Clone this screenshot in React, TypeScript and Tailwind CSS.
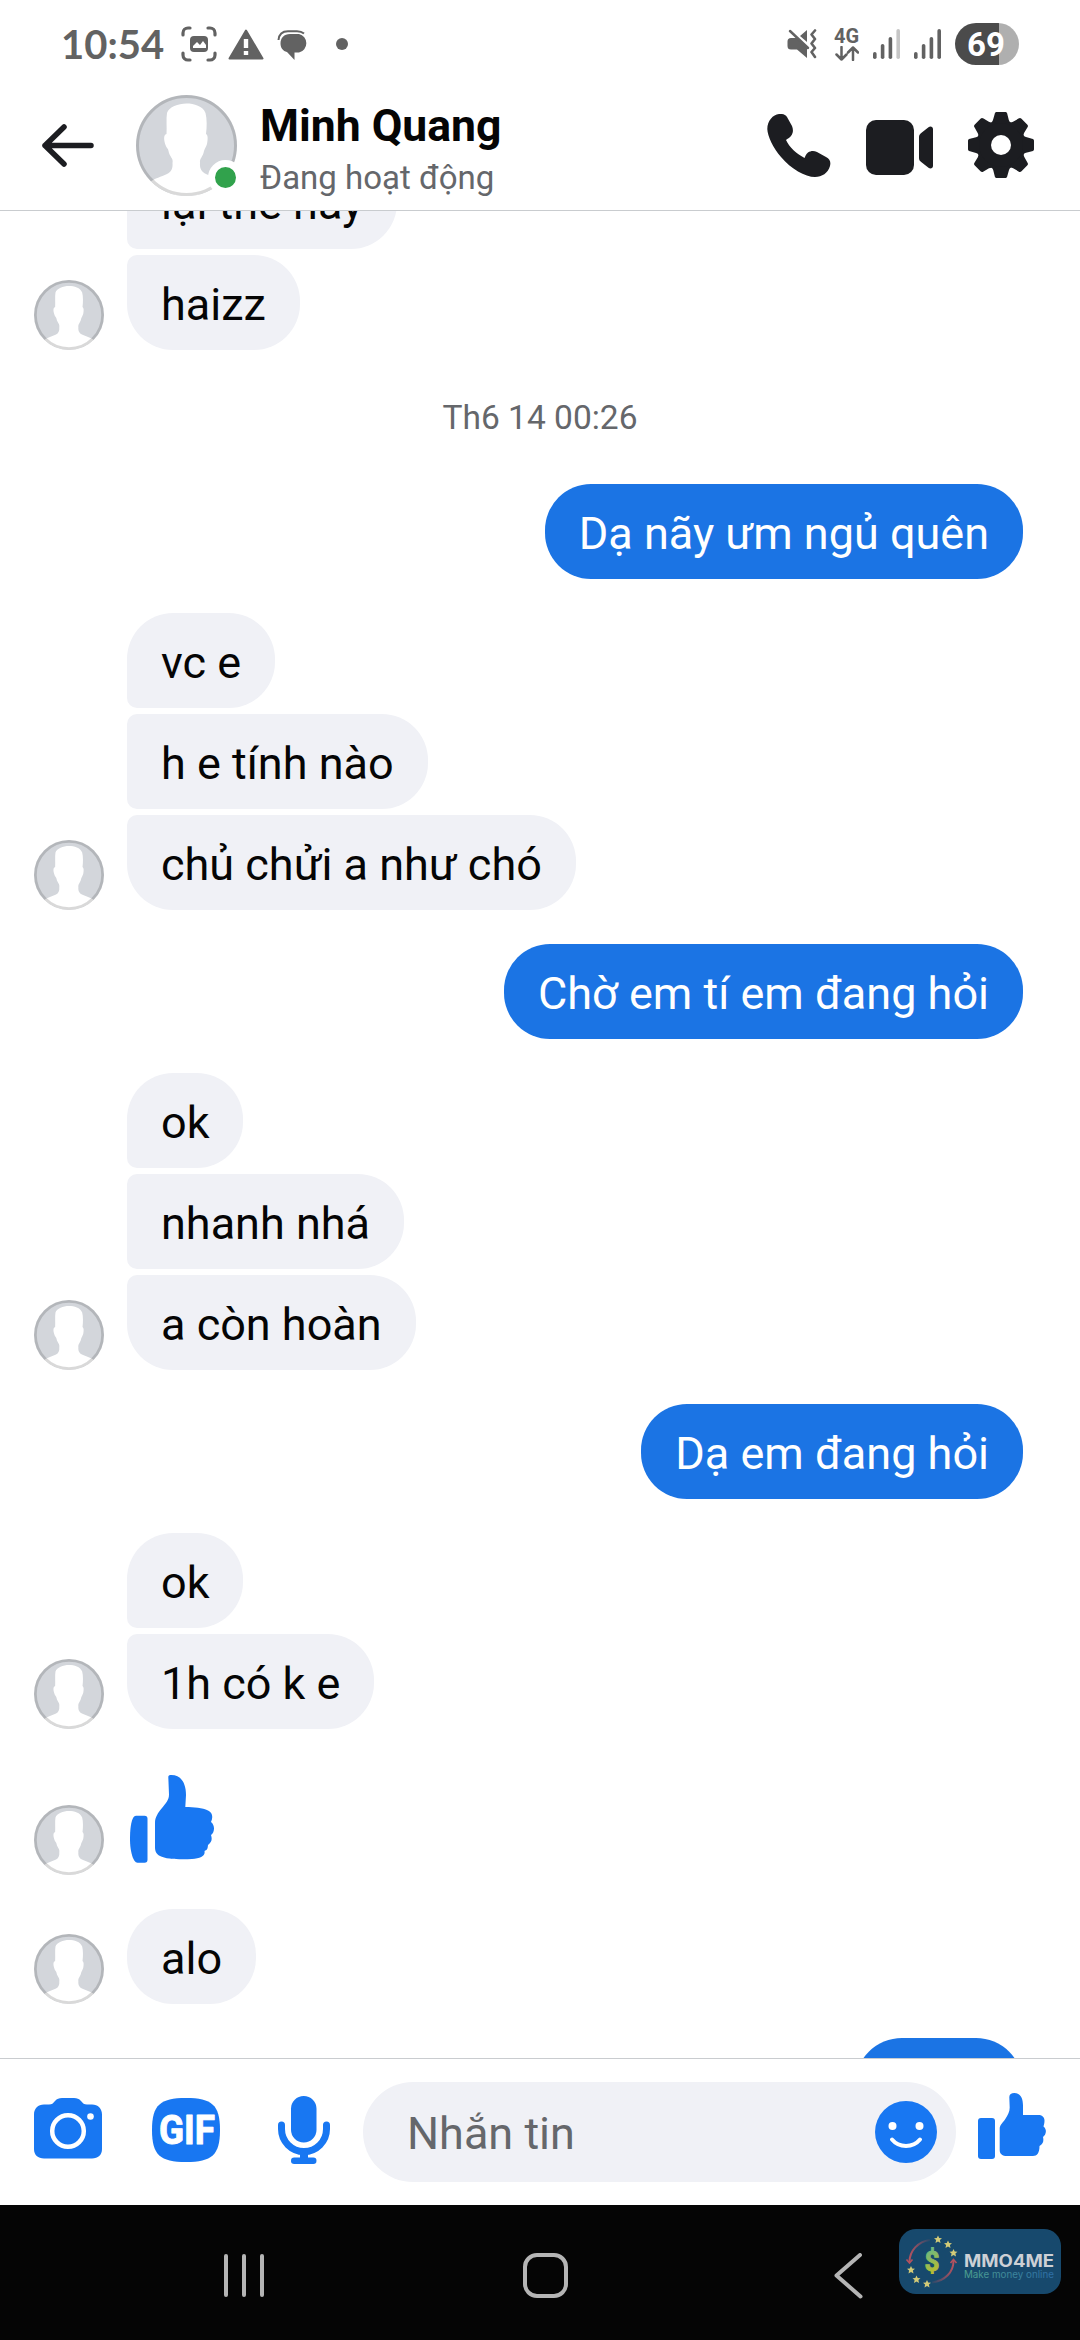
import React from 'react'

type Corner = 'single' | 'first' | 'middle' | 'last'

interface Group {
  from: 'me' | 'them'
  texts: string[]
}

// Groups of messages, in the order they were sent
const GROUPS: Group[] = [
  { from: 'me', texts: ['Dạ nãy ưm ngủ quên'] },
  { from: 'them', texts: ['vc e', 'h e tính nào', 'chủ chửi a như chó'] },
  { from: 'me', texts: ['Chờ em tí em đang hỏi'] },
  { from: 'them', texts: ['ok', 'nhanh nhá', 'a còn hoàn'] },
  { from: 'me', texts: ['Dạ em đang hỏi'] },
  { from: 'them', texts: ['ok', '1h có k e'] },
]

const CORNERS: Record<Corner, string> = {
  single: 'rounded-[46px]',
  first: 'rounded-[46px] rounded-bl-[10px]',
  middle: 'rounded-r-[46px] rounded-l-[10px]',
  last: 'rounded-[46px] rounded-tl-[10px]',
}

const cornerFor = (i: number, count: number): Corner => {
  if (count === 1) return 'single'
  if (i === 0) return 'first'
  return i === count - 1 ? 'last' : 'middle'
}

const Avatar: React.FC<{ className: string; ring?: number }> = ({ className, ring = 4 }) => (
  <svg viewBox="0 0 101 101" className={className}>
    <clipPath id="avatar-clip">
      <circle cx="50.5" cy="50.5" r="50.5" />
    </clipPath>
    <g clipPath="url(#avatar-clip)">
      <rect width="101" height="101" fill="#d3d6db" />
      <path
        fill="#fff"
        d="M50.5 8.5C42 8.5 33 12 31 18c-1 6 0 14-.5 21-3.500 1-2.500 7-1 11 1.500 4 2.500 3 3 6 1 6 5 7 4 12 .5 6-1.500 9-5.500 11-6 3-12 4-17 8v14h73V87c-5-4-11-5-17-8-4-2-6.500-5-6-11-.5-5 3-6 4-12 1-3 2-4 3-7 1-5 1-9-1-10 1-7 1-15-.5-21C67 11 58 8.500 50.500 8.500Z"
      />
    </g>
    <circle cx="50.5" cy="50.5" r={50.5 - ring / 2} fill="none" stroke="#000" strokeOpacity=".15" strokeWidth={ring} />
  </svg>
)

const Bubble: React.FC<{ mine?: boolean; corner: Corner; children: React.ReactNode }> = ({ mine, corner, children }) => (
  <div
    className={`flex h-[95px] w-fit items-center px-[34px] pt-1 text-[45px] leading-none whitespace-nowrap ${
      mine ? 'bg-[#1b74e4] text-white' : 'bg-[#f0f1f6] text-[#050505]'
    } ${CORNERS[corner]}`}
  >
    {children}
  </div>
)

const MessageGroup: React.FC<{ group: Group }> = ({ group }) => {
  const mine = group.from === 'me'
  return (
    <div className={`flex items-end ${mine ? 'justify-end pr-[57px]' : 'pl-[34px]'}`}>
      {!mine && <Avatar className="mr-[23px] size-[70px] shrink-0" />}
      <div className="flex flex-col gap-1.5">
        {group.texts.map((text, i) => (
          <Bubble key={i} mine={mine} corner={cornerFor(i, group.texts.length)}>
            {text}
          </Bubble>
        ))}
      </div>
    </div>
  )
}

// Four signal bars; the ones past `level` are dimmed
const Signal: React.FC<{ level: number }> = ({ level }) => (
  <svg viewBox="0 0 27 30" className="h-[30px] w-[27px]">
    {[7, 15, 22, 30].map((h, i) => (
      <rect key={h} x={i * 7.8} y={30 - h} width="3.600" height={h} rx="1.800" fill={i < level ? '#626262' : '#c6c6c6'} />
    ))}
  </svg>
)

const StatusBar: React.FC = () => (
  <div className="flex h-[88px] items-center pr-[61px] pl-[61px] text-[#626262]">
    <span className="w-[103px] font-['Lato',sans-serif] text-[40px] leading-none font-bold">
      10:54
    </span>
    <svg viewBox="0 0 36 36" className="ml-[17px] size-[36px]" fill="none" stroke="currentColor" strokeWidth="3.200" strokeLinecap="round">
      <path d="M2 9V7a5 5 0 0 1 5-5h2M27 2h2a5 5 0 0 1 5 5v2M34 27v2a5 5 0 0 1-5 5h-2M9 34H7a5 5 0 0 1-5-5v-2" />
      <rect x="9" y="10" width="18" height="16" rx="4" fill="currentColor" stroke="none" />
      <path d="M12 22v-2l4-4 3 3 3-4 3 4v3Z" fill="#fff" stroke="none" />
    </svg>
    <svg viewBox="0 0 36 31" className="ml-[11px] h-[31px] w-[36px]">
      <path d="M18 1.500 34.500 29.500H1.500Z" fill="currentColor" stroke="currentColor" strokeWidth="2" strokeLinejoin="round" />
      <path d="M15.800 10h4.400v9h-4.400zM15.800 22h4.400v4h-4.400z" fill="#fff" />
    </svg>
    <svg viewBox="0 0 32 30" className="mt-[2px] ml-[13px] h-[30px] w-[32px]">
      <path d="M1.500 10C2 4 6 1.200 11 1.200h9c3 0 5 .6 7 2.300" fill="none" stroke="currentColor" strokeWidth="2" />
      <path d="M13 4h9a9.500 9.500 0 0 1 0 18.500h-4.500V30L10 22C6 21 3.500 18 3.500 13.500 3.500 8 7 4 13 4Z" fill="currentColor" />
    </svg>
    <span className="ml-[27px] size-3 rounded-full bg-[#626262]" />

    <div className="ml-auto flex items-center">
      <svg viewBox="0 0 30 30" className="h-[30px] w-[30px]">
        <path d="M4 9h7l9 9v11L10 20.500H4a3.500 3.500 0 0 1-3.500-3.500v-4.500A3.500 3.500 0 0 1 4 9ZM13 7l7-6v12Z" fill="currentColor" />
        <path d="m3 2 18 17" stroke="currentColor" strokeWidth="2.500" strokeLinecap="round" />
        <path d="m28 1.500-3.500 4 3.500 4.500-3.500 4.500 3.500 4.500-3.500 4 3.500 5" fill="none" stroke="currentColor" strokeWidth="2.600" strokeLinejoin="round" strokeLinecap="round" />
      </svg>
      <div className="ml-[16px] flex w-[27px] flex-col items-center">
        <span className="font-['Roboto',sans-serif] text-[20px] leading-[17px] font-bold">4G</span>
        <svg viewBox="0 0 24 15" className="mt-[1px] h-[15px] w-[24px]" fill="none" stroke="currentColor" strokeWidth="2.500" strokeLinecap="round" strokeLinejoin="round">
          <path d="M6.500 1v12.500m-5-5 5 5 5-5M18 14V1.500m-5 5 5-5 5 5" />
        </svg>
      </div>
      <div className="ml-[13px] flex gap-[14px]">
        <Signal level={3} />
        <Signal level={4} />
      </div>
      <div className="ml-[14px] flex h-[42px] w-[64px] items-center justify-center rounded-full bg-linear-to-r from-[#4b4b4b] from-[68%] to-[#afafaf] to-[68%] pr-0.5 font-['Roboto',sans-serif] text-[33px] leading-none font-bold text-white">
        69
      </div>
    </div>
  </div>
)

const PhoneIcon = () => (
  <svg viewBox="0 0 64 63" className="h-[63px] w-[64px]" fill="#1c1d21">
    <path d="M12 0c4-.3 6.500.5 8 3l5 9c1.500 4 1.200 7-1 10-1.500 2-3.500 2.500-5 4 3 7 11 14 18.500 18 1-2 1.500-4 3.500-5.500 3-2 6-2 9-.5l9 5c4 2 5 5 4 9C61 59 55 63 48 63 38 63 24 55 14 43 6 34 .5 22 .3 15 .3 7 6 .5 12 0Z" />
  </svg>
)

const VideoIcon = () => (
  <svg viewBox="0 0 67 55" className="mt-[4px] h-[55px] w-[67px]" fill="#1c1d21">
    <rect width="48" height="55" rx="10" />
    <path d="M53 17c0-2 .8-3 2.500-4.300l7-5.500c2-1.500 4.500-.5 4.500 2v36.600c0 2.500-2.500 3.500-4.500 2l-7-5.500C53.800 41 53 40 53 38Z" />
  </svg>
)

const GearIcon = () => (
  <svg viewBox="0 0 66 66" className="size-[66px]" fill="#1c1d21">
    {[0, 45, 90, 135, 180, 225, 270, 315].map((deg) => (
      <path key={deg} transform={`rotate(${deg} 33 33)`} d="M29 0h8c1.500 0 2 .6 2.300 2l1.500 6c.6 2 2 3 4 4v8H21v-8c2-1 3.400-2 4-4l1.700-6C27 .6 27.500 0 29 0Z" />
    ))}
    <circle cx="33" cy="33" r="22" />
    <circle cx="33" cy="33" r="10" fill="#fff" />
  </svg>
)

const Header: React.FC = () => (
  <header className="flex h-[122px] items-start pr-[46px] pl-[42px]">
    <svg viewBox="0 0 52 43" className="mt-[36px] h-[43px] w-[52px]" fill="none" stroke="#1c1d21" strokeWidth="5.500" strokeLinecap="round" strokeLinejoin="round">
      <path d="M22 3 3 21.500 22 40M3 21.500h46" />
    </svg>
    <div className="relative mt-[7px] ml-[42px]">
      <Avatar className="size-[101px]" ring={3} />
      <span className="absolute right-[-6px] bottom-[1px] size-[35px] rounded-full border-[7px] border-white bg-[#31a24c]" />
    </div>
    <div className="ml-[23px] flex flex-col">
      <h1 className="mt-[14px] text-[44.500px] leading-[48px] font-bold text-[#050505]">Minh Quang</h1>
      <p className="mt-[7px] text-[33px] leading-[41px] text-[#65676b]">Đang hoạt động</p>
    </div>
    <div className="mt-[24px] ml-auto flex items-center gap-[35px]">
      <PhoneIcon />
      <VideoIcon />
      <GearIcon />
    </div>
  </header>
)

const BigLike = () => (
  <svg viewBox="0 0 84 88" className="h-[88px] w-[84px]" fill="#1877f2">
    <path d="M6 40.700h8.500a3 3 0 0 1 3 3v41a3 3 0 0 1-3 3H7.500C3 87.700 0 76 0 64c0-11 1.500-23.300 6-23.300Z" />
    <path d="M38.300 2c0-1.500 1-2 3-2C51 0 56 8 56 20l-.7 12c9 0 17 .8 22.700 3.500 5 2.500 5 7 3 11.500 4 3 4 10 0 13 1.500 5 .5 7-3 10-.3 4-1 5-3.500 6 1 5-4 7.500-12.500 8C52 84.500 36 84.500 30 81c-4-2-5-5-5-9V48c0-6 3-10 7-15s7-8 7-13.500Z" />
  </svg>
)

const SmallLike = () => (
  <svg viewBox="0 0 68 66" className="h-[66px] w-[68px]" fill="#1877f2">
    <rect y="25" width="17" height="41" rx="3" />
    <path d="M31.300 4c0-2.500 2-4 5-4C43 0 45 6 45 12.500V22h15c4 0 6.500 2 6.500 5.500 0 2.500-.5 4-1 6 3.500 2.500 3 8-.5 10.500 1 4 0 7-3.500 9C61.500 60 59 63 55 63H29c-4.500 0-7.300-2-7.300-6V36c0-4 2.500-5.500 5.300-9.500 3-4.500 4.700-8 4.700-12Z" />
  </svg>
)

const Chat: React.FC = () => (
  <main className="flex flex-1 flex-col gap-[34px] overflow-hidden border-y border-[#c9cccf]">
    {/* top of this group is scrolled under the header */}
    <div className="-mt-[57px] shrink-0">
      <MessageGroup group={{ from: 'them', texts: ['lại thế này', 'haizz'] }} />
    </div>
    <time className="flex h-[66px] shrink-0 items-center justify-center pt-0.5 text-[33.500px] leading-none text-[#65676b]">
      Th6 14 00:26
    </time>
    {GROUPS.map((group, i) => (
      <MessageGroup key={i} group={group} />
    ))}
    <div className="flex h-[112px] shrink-0 items-end pl-[34px]">
      <Avatar className="mr-[26px] size-[70px]" />
      <div className="self-start pt-3">
        <BigLike />
      </div>
    </div>
    <MessageGroup group={{ from: 'them', texts: ['alo'] }} />
    <div className="mr-[57px] h-[95px] w-[168px] shrink-0 self-end rounded-[47px] bg-[#1b74e4]" />
  </main>
)

const Composer: React.FC = () => (
  <footer className="flex h-[146px] shrink-0 items-start pr-[34px] pl-[34px]">
    <svg viewBox="0 0 68 61" className="mt-[39px] h-[61px] w-[68px]">
      <path
        fill="#1877f2"
        d="M10 6.500h5c3 0 4-1 6-3.500 2-2.300 4-3 7-3h12c3 0 5 .7 7 3 2 2.500 3 3.500 6 3.500h5c6 0 10 4 10 10V51c0 6-4 9.500-10 9.500H10C4 60.500 0 57 0 51V16.500c0-6 4-10 10-10Z"
      />
      <circle cx="34" cy="33" r="15.800" fill="none" stroke="#fff" strokeWidth="4.500" />
      <circle cx="56.500" cy="18.500" r="3.300" fill="#fff" />
    </svg>
    <svg viewBox="0 0 68 64" className="mt-[39px] ml-[50px] h-[64px] w-[68px]">
      <path fill="#1877f2" d="M34 0c26 0 34 7 34 32s-8 32-34 32S0 57 0 32 8 0 34 0Z" />
      <text x="7" y="46" textLength="56" lengthAdjust="spacingAndGlyphs" fill="#fff" stroke="#fff" strokeWidth="1" strokeLinejoin="round" className="font-['Roboto',sans-serif] text-[40px] font-bold">
        GIF
      </text>
    </svg>
    <svg viewBox="0 0 52 68" className="mt-[37px] ml-[58px] h-[68px] w-[52px]" fill="#1877f2">
      <rect x="13" width="25.500" height="46.500" rx="12.700" />
      <path d="M3.500 29v4a22.500 22.500 0 0 0 45 0v-4" fill="none" stroke="#1877f2" strokeWidth="7" strokeLinecap="round" />
      <path d="M22 56h8v7h-8z" />
      <rect x="13" y="61.500" width="25.500" height="6.500" rx="3.200" />
    </svg>
    <div className="mt-[23px] ml-[33px] flex h-[100px] w-[593px] items-center rounded-full bg-[#f0f1f6] pr-[19px] pl-[44px]">
      <span className="pt-0.5 text-[45px] leading-none text-[#65676b]">Nhắn tin</span>
      <svg viewBox="0 0 62 62" className="ml-auto size-[62px]">
        <circle cx="31" cy="31" r="31" fill="#1877f2" />
        <circle cx="17.500" cy="25" r="4" fill="#fff" />
        <circle cx="44.500" cy="25" r="4" fill="#fff" />
        <path d="M17 38.500c7 8.500 21 8.500 28 0" fill="none" stroke="#fff" strokeWidth="4" strokeLinecap="round" />
      </svg>
    </div>
    <div className="mt-[34px] ml-auto">
      <SmallLike />
    </div>
  </footer>
)

const STAR = 'M0-4 1.200-1.400 4-1.200 1.900.6 2.500 3.400 0 2-2.500 3.400-1.900.6-4-1.200-1.200-1.400Z'
const STARS = [[39, 10.500], [49, 15.500], [54.500, 24], [12, 41], [17.500, 50.500], [28, 55]]

const Watermark: React.FC = () => (
  <svg viewBox="0 0 162 65" className="h-[65px] w-[162px]">
    <defs>
      <linearGradient id="wm-dollar" x1="0" y1="0" x2=".3" y2="1">
        <stop offset="0" stopColor="#55b79a" />
        <stop offset="1" stopColor="#c0bd28" />
      </linearGradient>
      <linearGradient id="wm-tagline">
        <stop offset="0" stopColor="#4fa38e" />
        <stop offset="1" stopColor="#2d6da8" />
      </linearGradient>
      <linearGradient id="wm-left">
        <stop offset="0" stopColor="#b4525f" />
        <stop offset="1" stopColor="#b4525f" stopOpacity=".1" />
      </linearGradient>
      <linearGradient id="wm-right">
        <stop offset="0" stopColor="#b4525f" stopOpacity=".1" />
        <stop offset="1" stopColor="#b4525f" />
      </linearGradient>
    </defs>
    <rect width="162" height="65" rx="17" fill="#17496d" />
    <path d="M10.500 33C10.500 22 19 12.500 31 11" fill="none" stroke="url(#wm-left)" strokeWidth="2" />
    <path d="m7.500 30.500 3 3.500 3-3.500M51.500 34l3-3.500 3 3.500" fill="none" stroke="#b4525f" strokeWidth="1.600" />
    <path d="M54.500 32C54.500 43 46 52 33 53.500" fill="none" stroke="url(#wm-right)" strokeWidth="2" />
    {STARS.map(([x, y]) => (
      <path key={x} d={STAR} transform={`translate(${x} ${y})`} fill="#d3cb78" />
    ))}
    <text x="25.500" y="42" fill="url(#wm-dollar)" stroke="url(#wm-dollar)" strokeWidth="1" className="font-['Roboto',sans-serif] text-[28px] font-bold" textLength="15" lengthAdjust="spacingAndGlyphs">
      $
    </text>
    <text x="65" y="37.500" textLength="90" lengthAdjust="spacingAndGlyphs" fill="#cdd0d5" className="font-['Inter',sans-serif] text-[17px] font-bold">
      MMO4ME
    </text>
    <text x="65" y="49" textLength="90" lengthAdjust="spacingAndGlyphs" fill="url(#wm-tagline)" className="font-['Inter',sans-serif] text-[10px]">
      Make money online
    </text>
  </svg>
)

const NavBar: React.FC = () => (
  <nav className="relative flex h-[135px] shrink-0 items-start bg-[#050505] pt-[48px] pl-[223.500px]">
    <div className="mt-[1px] flex gap-[13.500px]">
      <span className="h-[43px] w-[4.500px] rounded-full bg-[#b5b5b5]" />
      <span className="h-[43px] w-[4.500px] rounded-full bg-[#b5b5b5]" />
      <span className="h-[43px] w-[4.500px] rounded-full bg-[#b5b5b5]" />
    </div>
    <span className="ml-[259px] size-[45px] rounded-[14px] border-4 border-[#b5b5b5]" />
    <svg viewBox="0 0 29 46" className="ml-[266px] h-[46px] w-[29px]" fill="none" stroke="#b5b5b5" strokeWidth="4" strokeLinecap="round" strokeLinejoin="round">
      <path d="M26 2 2.500 22.500 26.500 43.500" />
    </svg>
    <div className="absolute top-[24px] right-[19px]">
      <Watermark />
    </div>
  </nav>
)

export default function App() {
  return (
    <div className="flex h-[2340px] w-[1080px] flex-col overflow-hidden bg-white font-['Roboto',sans-serif]">
      <StatusBar />
      <Header />
      <Chat />
      <Composer />
      <NavBar />
    </div>
  )
}
